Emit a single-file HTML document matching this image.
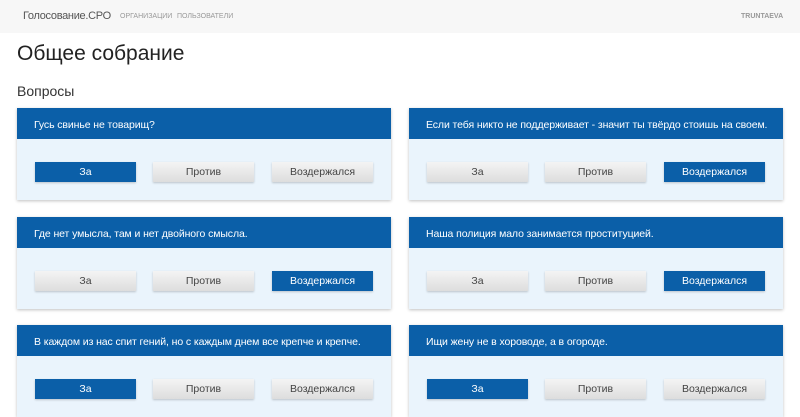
<!DOCTYPE html><html><head><meta charset="utf-8"><style>
html,body{margin:0;width:800px;height:400px;overflow:hidden}
body{background:#fff;font-family:"Liberation Sans",sans-serif;color:#333}
.nav{height:33px;background:#f7f7f7;position:relative}
.brand{position:absolute;left:23px;top:10px;font-size:11px;color:#555;letter-spacing:-0.3px}
.nl{position:absolute;top:13px;font-size:7px;color:#999}
h1{position:absolute;left:17px;top:42px;margin:0;font-weight:normal;font-size:21px;color:#222}
h2{position:absolute;left:17px;top:83px;margin:0;font-weight:normal;font-size:14px;color:#333}
.card{position:absolute;width:374px;height:92px;background:#eaf4fc;box-shadow:0 1px 3px rgba(0,0,0,.25)}
.hd{height:31px;background:#0b5fa8;color:#fff;font-size:10.5px;line-height:34px;padding-left:17px;white-space:nowrap;overflow:hidden;letter-spacing:-0.1px}
.b{position:absolute;top:54px;width:101px;height:20px;line-height:20px;text-align:center;font-size:10.5px;color:#444;background:linear-gradient(#f4f4f4,#ddd);box-shadow:0 1px 2px rgba(0,0,0,.2)}
.b.a{background:#0b5fa8;color:#fff}
.b1{left:18px}.b2{left:136px}.b3{left:255px}
</style></head><body>
<div class="nav"><span class="brand">Голосование.СРО</span><span class="nl" style="left:120px">ОРГАНИЗАЦИИ</span><span class="nl" style="left:177px">ПОЛЬЗОВАТЕЛИ</span><span class="nl" style="left:741px;font-weight:bold">TRUNTAEVA</span></div>
<h1>Общее собрание</h1><h2>Вопросы</h2>
<div class="card" style="left:17px;top:108px"><div class="hd">Гусь свинье не товарищ?</div><div class="b b1 a">За</div><div class="b b2">Против</div><div class="b b3">Воздержался</div></div>
<div class="card" style="left:409px;top:108px"><div class="hd">Если тебя никто не поддерживает - значит ты твёрдо стоишь на своем.</div><div class="b b1">За</div><div class="b b2">Против</div><div class="b b3 a">Воздержался</div></div>
<div class="card" style="left:17px;top:217px"><div class="hd">Где нет умысла, там и нет двойного смысла.</div><div class="b b1">За</div><div class="b b2">Против</div><div class="b b3 a">Воздержался</div></div>
<div class="card" style="left:409px;top:217px"><div class="hd">Наша полиция мало занимается проституцией.</div><div class="b b1">За</div><div class="b b2">Против</div><div class="b b3 a">Воздержался</div></div>
<div class="card" style="left:17px;top:325px"><div class="hd">В каждом из нас спит гений, но с каждым днем все крепче и крепче.</div><div class="b b1 a">За</div><div class="b b2">Против</div><div class="b b3">Воздержался</div></div>
<div class="card" style="left:409px;top:325px"><div class="hd">Ищи жену не в хороводе, а в огороде.</div><div class="b b1 a">За</div><div class="b b2">Против</div><div class="b b3">Воздержался</div></div>
</body></html>
